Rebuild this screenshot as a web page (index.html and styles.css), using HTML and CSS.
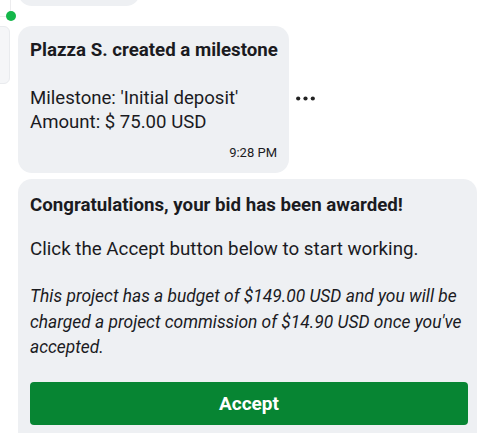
FILE: index.html
```html
<!DOCTYPE html>
<html>
<head>
<meta charset="utf-8">
<link rel="stylesheet" href="styles.css">
</head>
<body>
<div class="thread">
  <div class="side-panel"></div>
  <div class="connector-v"></div>
  <div class="connector-h"></div>
  <span class="status-dot"></span>

  <div class="bubble bubble-prev"></div>

  <div class="row">
    <div class="bubble bubble-milestone">
      <p class="title">Plazza S. created a milestone</p>
      <p class="body">Milestone: 'Initial deposit'<br>Amount: $ 75.00 USD</p>
      <div class="time">9:28 PM</div>
    </div>
    <svg class="more" width="19" height="5" viewBox="0 0 19 5" aria-label="More">
      <circle cx="2.2" cy="2.5" r="2.1" fill="#222"/>
      <circle cx="9.5" cy="2.5" r="2.1" fill="#222"/>
      <circle cx="16.8" cy="2.5" r="2.1" fill="#222"/>
    </svg>
  </div>

  <div class="bubble bubble-award">
    <p class="title">Congratulations, your bid has been awarded!</p>
    <p class="body">Click the Accept button below to start working.</p>
    <p class="note">This project has a budget of $149.00 USD and you will be charged a project commission of $14.90 USD once you've accepted.</p>
    <button class="accept">Accept</button>
  </div>
</div>
</body>
</html>
```
FILE: styles.css
```css
* { box-sizing: border-box; }
html, body { margin: 0; padding: 0; background: #ffffff; }
body {
  font-family: Roboto, "Noto Sans", Arial, sans-serif;
  color: #1b1b1f;
  overflow: hidden;
}
.thread {
  position: relative;
  padding-left: 18px;
  display: flex;
  flex-direction: column;
  align-items: flex-start;
}
.side-panel {
  position: absolute;
  left: -6px;
  top: 26px;
  width: 16px;
  height: 58px;
  background: #f5f6f8;
  border: 1px solid #e9ebee;
  border-radius: 6px;
}
.connector-v {
  position: absolute;
  left: 10px;
  top: 0;
  width: 1px;
  height: 12px;
  background: #ececee;
}
.connector-h {
  position: absolute;
  left: 0;
  top: 16px;
  width: 7px;
  height: 1px;
  background: #ececee;
}
.status-dot {
  position: absolute;
  left: 6px;
  top: 11px;
  width: 10px;
  height: 10px;
  border-radius: 50%;
  background: #14b74a;
}
.bubble {
  background: #eef0f3;
  border-radius: 14px;
}
.bubble-prev {
  width: 122px;
  height: 40px;
  margin-top: -34px;
}
.row {
  display: flex;
  align-items: center;
  gap: 7px;
  margin-top: 20px;
}
.bubble-milestone {
  width: 271px;
  padding: 12px 12px 12px 12px;
}
.title {
  margin: 0;
  font-weight: 700;
  font-size: 18.7px;
  line-height: 24px;
  white-space: nowrap;
}
.body {
  margin: 24px 0 0;
  font-size: 18.6px;
  line-height: 24px;
}
.time {
  text-align: right;
  font-size: 13px;
  line-height: 16px;
  margin-top: 11px;
}
.more {
  display: block;
  margin-top: -2px;
}
.bubble-award {
  width: 459px;
  margin-top: 6px;
  padding: 14px 11px 20px 12px;
  border-radius: 14px 14px 0 0;
}
.bubble-award .body {
  margin-top: 20px;
  font-size: 18.75px;
}
.note {
  margin: 23px 0 0;
  font-style: italic;
  font-size: 17.4px;
  line-height: 25.5px;
}
.accept {
  display: block;
  width: 438px;
  height: 43px;
  margin-top: 21.5px;
  border: 0;
  border-radius: 4px;
  background: #078533;
  color: #ffffff;
  font-family: Roboto, "Noto Sans", Arial, sans-serif;
  font-weight: 700;
  font-size: 19px;
}
```
